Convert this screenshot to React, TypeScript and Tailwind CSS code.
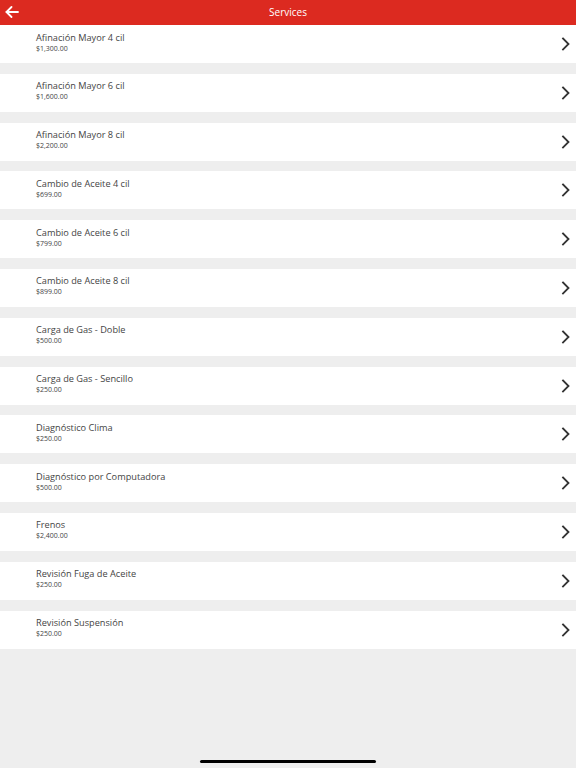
import React from 'react';

interface Service {
  name: string;
  price: string;
}

const services: Service[] = [
  { name: 'Afinación Mayor 4 cil', price: '$1,300.00' },
  { name: 'Afinación Mayor 6 cil', price: '$1,600.00' },
  { name: 'Afinación Mayor 8 cil', price: '$2,200.00' },
  { name: 'Cambio de Aceite 4 cil', price: '$699.00' },
  { name: 'Cambio de Aceite 6 cil', price: '$799.00' },
  { name: 'Cambio de Aceite 8 cil', price: '$899.00' },
  { name: 'Carga de Gas - Doble', price: '$500.00' },
  { name: 'Carga de Gas - Sencillo', price: '$250.00' },
  { name: 'Diagnóstico Clima', price: '$250.00' },
  { name: 'Diagnóstico por Computadora', price: '$500.00' },
  { name: 'Frenos', price: '$2,400.00' },
  { name: 'Revisión Fuga de Aceite', price: '$250.00' },
  { name: 'Revisión Suspensión', price: '$250.00' },
];

function BackArrow() {
  return (
    <svg width="14" height="12" viewBox="0 0 14 12" fill="none" stroke="white" strokeWidth="1.8" strokeLinecap="round" strokeLinejoin="round">
      <path d="M13 6H1.5" />
      <path d="M6.5 1L1.5 6l5 5" />
    </svg>
  );
}

function Chevron() {
  return (
    <svg width="10" height="14" viewBox="0 0 10 14" fill="none" stroke="#333333" strokeWidth="1.8" strokeLinecap="square">
      <path d="M2 1.5l5.5 5.5L2 12.5" />
    </svg>
  );
}

function ServiceRow({ service }: { service: Service }) {
  return (
    <div className="flex h-[38px] items-center justify-between bg-white pl-9 pr-[5px]">
      <div className="flex flex-col pb-[4px]">
        <span className="text-[9.2px] leading-[13px] text-[#444444]">{service.name}</span>
        <span className="text-[7px] leading-[10px] text-[#444444]">{service.price}</span>
      </div>
      <Chevron />
    </div>
  );
}

export default function App() {
  return (
    <div
      className="relative flex h-[768px] w-[576px] flex-col bg-[#eeeeee]"
      style={{ fontFamily: '"Open Sans", "Noto Sans", sans-serif' }}
    >
      <div className="relative flex h-[25px] items-center justify-center bg-[#dc2a20]">
        <div className="absolute left-[5px] top-[6px]">
          <BackArrow />
        </div>
        <span className="text-[10px] text-white">Services</span>
      </div>
      <div className="flex flex-col gap-[10.8px]">
        {services.map((s) => (
          <ServiceRow key={s.name} service={s} />
        ))}
      </div>
      <div className="absolute bottom-[5px] left-[200px] h-[3px] w-[176px] rounded-full bg-black" />
    </div>
  );
}
